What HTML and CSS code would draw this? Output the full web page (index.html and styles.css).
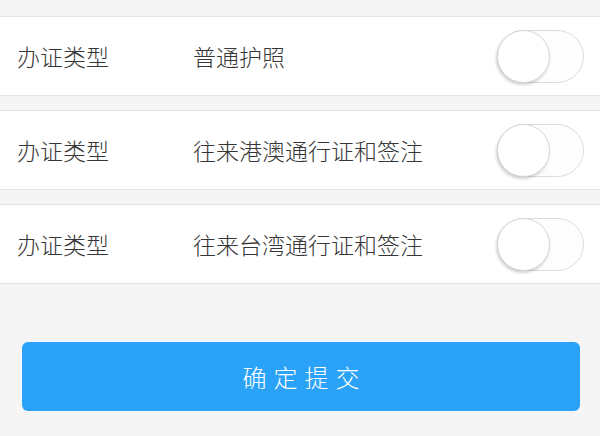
FILE: index.html
```html
<!DOCTYPE html>
<html lang="zh-CN">
<head>
<meta charset="UTF-8">
<meta name="viewport" content="width=device-width, initial-scale=1.0">
<title>办证类型</title>
<link rel="stylesheet" href="styles.css">
</head>
<body>
<div class="list">
    <div class="row">
        <span class="label">办证类型</span>
        <span class="value">普通护照</span>
        <label class="switch"><input type="checkbox"><span class="track"></span></label>
    </div>
    <div class="row">
        <span class="label">办证类型</span>
        <span class="value">往来港澳通行证和签注</span>
        <label class="switch"><input type="checkbox"><span class="track"></span></label>
    </div>
    <div class="row">
        <span class="label">办证类型</span>
        <span class="value">往来台湾通行证和签注</span>
        <label class="switch"><input type="checkbox"><span class="track"></span></label>
    </div>
</div>
<div class="actions">
    <button class="submit">确定提交</button>
</div>
</body>
</html>
```

FILE: styles.css
```css
body {
    margin: 0;
    background-color: #f5f5f5;
    font-family: "Noto Sans CJK SC", "DejaVu Sans", sans-serif;
    color: #363636;
}

.list {
    padding-top: 16px;
}

.row {
    display: flex;
    align-items: center;
    height: 78px;
    padding: 0 16px 0 17px;
    margin-bottom: 14px;
    background-color: #fff;
    border-top: 1px solid #e4e4e4;
    border-bottom: 1px solid #e4e4e4;
    font-size: 23px;
    font-weight: 300;
}

.label {
    width: 176px;
}

.value {
    flex: 1;
}

/* toggle switch */
.switch {
    position: relative;
    width: 87px;
    height: 53px;
    cursor: pointer;
}

.switch input {
    display: none;
}

.track {
    display: block;
    box-sizing: border-box;
    width: 100%;
    height: 100%;
    border: 1px solid #dcdcdc;
    border-radius: 27px;
    background-color: #fdfdfd;
}

.track::after {
    content: "";
    position: absolute;
    left: 0;
    top: 0;
    box-sizing: border-box;
    width: 53px;
    height: 53px;
    border-radius: 50%;
    background-color: #fff;
    border: 1px solid #d6d6d6;
    box-shadow: -1px 2px 3px rgba(0, 0, 0, 0.18);
}

.actions {
    padding: 44px 20px 0 22px;
}

.submit {
    display: block;
    width: 100%;
    height: 69px;
    border: none;
    border-radius: 6px;
    background-color: #2aa2f8;
    color: #fff;
    font-family: "Noto Sans CJK SC", "DejaVu Sans", sans-serif;
    font-size: 24px;
    font-weight: 300;
    letter-spacing: 7px;
    text-indent: 7px;
    cursor: pointer;
}
```
